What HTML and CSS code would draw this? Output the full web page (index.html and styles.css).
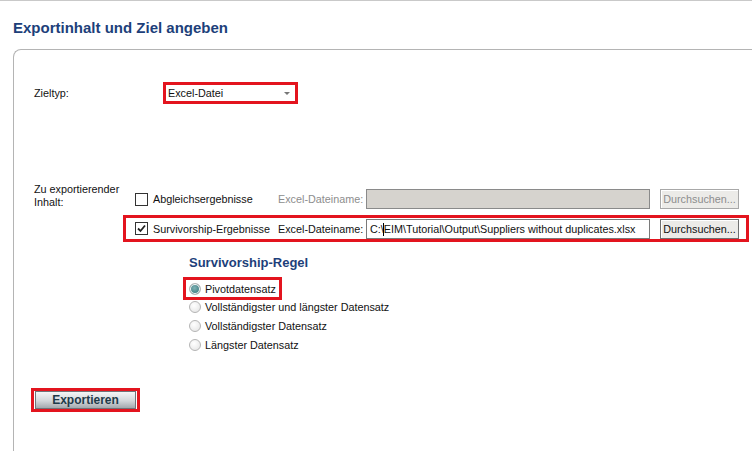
FILE: index.html
```html
<!DOCTYPE html>
<html lang="de">
<head>
  <meta charset="UTF-8" />
  <title>Exportinhalt und Ziel angeben</title>
  <link rel="stylesheet" href="styles.css">
</head>
<body>
  <div class="page">
    <h1 class="page-title">Exportinhalt und Ziel angeben</h1>

    <div class="panel">
      <div class="form-row target-row">
        <div class="form-label">Zieltyp:</div>
        <div class="mark combo-mark">
          <div class="combo">
            <span>Excel-Datei</span>
            <span class="combo-arrow"></span>
          </div>
        </div>
      </div>

      <div class="form-row content-row">
        <div class="form-label label-wrap">Zu exportierender Inhalt:</div>
        <div class="content-col">
          <div class="file-row">
            <label class="check-item">
              <span class="checkbox"></span>
              <span>Abgleichsergebnisse</span>
            </label>
            <span class="file-label disabled">Excel-Dateiname:</span>
            <div class="file-input disabled-input"></div>
            <button class="browse disabled-btn">Durchsuchen...</button>
          </div>
          <div class="file-row mark row-mark">
            <label class="check-item">
              <span class="checkbox checked">
                <svg width="9" height="9" viewBox="0 0 9 9"><path d="M1 4.5 L3.5 7 L8 1.5" fill="none" stroke="#222" stroke-width="1.8"/></svg>
              </span>
              <span>Survivorship-Ergebnisse</span>
            </label>
            <span class="file-label">Excel-Dateiname:</span>
            <div class="file-input"><span class="caret-text">C:\</span><span class="caret"></span>EIM\Tutorial\Output\Suppliers without duplicates.xlsx</div>
            <button class="browse">Durchsuchen...</button>
          </div>

          <div class="rules">
            <h2 class="rules-title">Survivorship-Regel</h2>
            <div class="radio-item mark radio-mark">
              <span class="radio selected"></span>Pivotdatensatz
            </div>
            <div class="radio-item"><span class="radio"></span>Vollständigster und längster Datensatz</div>
            <div class="radio-item"><span class="radio"></span>Vollständigster Datensatz</div>
            <div class="radio-item"><span class="radio"></span>Längster Datensatz</div>
          </div>
        </div>
      </div>

      <div class="mark export-mark">
        <button class="export-btn">Exportieren</button>
      </div>
    </div>
  </div>
</body>
</html>
```

FILE: styles.css
```css
* {
  margin: 0;
  padding: 0;
  box-sizing: border-box;
}

html, body {
  height: 100%;
  overflow: hidden;
  background: #fff;
  font-family: 'Liberation Sans', Arial, sans-serif;
  font-size: 10.8px;
  color: #111;
}

.page {
  display: flex;
  flex-direction: column;
  height: 100%;
  border-top: 1px solid #c9c9c9;
}

.page-title {
  font-size: 15px;
  font-weight: bold;
  color: #1d3f7a;
  padding: 18px 0 0 13px;
  height: 48px;
}

.panel {
  flex: 1;
  margin-left: 13px;
  border-left: 1px solid #b4b4b4;
  border-top: 1px solid #b4b4b4;
  border-top-left-radius: 8px;
  padding: 32px 0 0 20px;
  overflow: hidden;
}

/* red highlight frames */
.mark {
  border: 3px solid #e3141e;
}

.form-row {
  display: flex;
}

.form-label {
  width: 129px;
}

.target-row {
  align-items: center;
  height: 22px;
}

.combo-mark {
  width: 135px;
  height: 22px;
}

.combo {
  display: flex;
  align-items: center;
  justify-content: space-between;
  height: 100%;
  padding: 0 5px 0 2px;
  background: #fff;
}

.combo-arrow {
  width: 0;
  height: 0;
  border-left: 3px solid transparent;
  border-right: 3px solid transparent;
  border-top: 3px solid #777;
}

.content-row {
  margin-top: 78px;
}

.label-wrap {
  width: 89px;
  line-height: 13px;
  padding-top: 1px;
}

.content-col {
  display: flex;
  flex-direction: column;
}

.file-row {
  display: flex;
  align-items: center;
  height: 20px;
  margin-top: 7px;
  padding-left: 12px;
}

.row-mark {
  width: 626px;
  height: 27px;
  margin-top: 6px;
  padding-left: 9px;
}

.check-item {
  display: flex;
  align-items: center;
  gap: 5px;
  width: 143px;
}

.checkbox {
  display: flex;
  align-items: center;
  justify-content: center;
  width: 13px;
  height: 13px;
  border: 1px solid #333;
  background: #fff;
}

.file-label {
  width: 88px;
}

.disabled {
  color: #8d8d8d;
}

.file-input {
  width: 284px;
  height: 20px;
  border: 1px solid #7a7a7a;
  background: #fff;
  padding: 3px 0 0 3px;
  white-space: nowrap;
  overflow: hidden;
}

.disabled-input {
  background: #d6d3ce;
  border-color: #8a8a8a;
}

.caret {
  display: inline-block;
  width: 1px;
  height: 13px;
  background: #000;
  vertical-align: -3px;
  margin-left: -1px;
}

.browse {
  margin-left: 10px;
  width: 79px;
  height: 20px;
  font: inherit;
  color: #111;
  background: #ecebe8;
  border: 1px solid #707070;
  box-shadow: inset 1px 1px 0 #fff;
}

.disabled-btn {
  color: #8d8d8d;
  border-color: #a8a8a8;
}

.rules {
  padding-left: 66px;
  margin-top: 13px;
}

.rules-title {
  font-size: 13px;
  font-weight: bold;
  color: #1d3f7a;
  height: 22px;
}

.radio-item {
  display: flex;
  align-items: center;
  gap: 4px;
  height: 18.7px;
}

.radio-mark {
  width: 99px;
  height: 23px;
  margin-left: -6px;
  padding-left: 3px;
  margin-bottom: -2px;
}

.radio {
  width: 12px;
  height: 12px;
  border-radius: 50%;
  border: 1px solid #b5b5b5;
  background: radial-gradient(circle at 40% 35%, #fff, #e2e2e2);
}

.radio.selected {
  background: radial-gradient(circle at 45% 40%, #7fb3b5, #3e7c82 70%);
  box-shadow: inset 0 0 0 1px #fff;
}

.export-mark {
  display: inline-block;
  margin: 34px 0 0 -3px;
  padding: 0 1px;
  width: 109px;
  height: 24px;
}

.export-btn {
  display: block;
  width: 101px;
  height: 18px;
  font-family: 'Liberation Sans', Arial, sans-serif;
  font-size: 12px;
  font-weight: bold;
  color: #1f3a48;
  background: linear-gradient(#f4f5f6, #d3d7da 55%, #a3a9ae);
  border: 1px solid #6f7479;
}
```
